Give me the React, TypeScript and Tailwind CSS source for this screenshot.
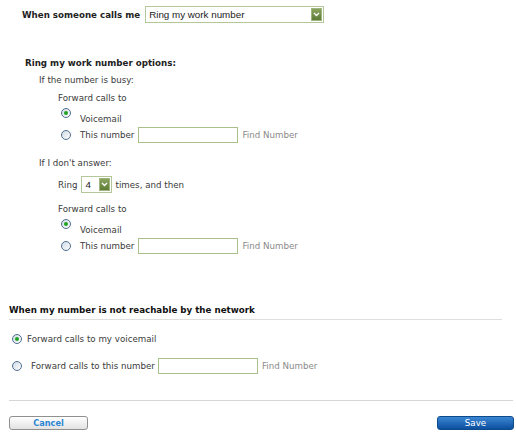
import React from 'react';

const Radio: React.FC<{ checked?: boolean }> = ({ checked }) => (
  <span className="relative inline-flex h-[10px] w-[10px] shrink-0 items-center justify-center rounded-full border border-[#4f6f8f] bg-gradient-to-br from-[#cfd9e4] to-white">
    {checked && <span className="h-[4px] w-[4px] rounded-full bg-[#21a321]" />}
  </span>
);

const Arrow: React.FC<{ className?: string }> = ({ className }) => (
  <span
    className={`flex h-[13px] w-[11px] items-center justify-center border border-[#9fb57f] bg-gradient-to-b from-[#89a35c] to-[#5f7d36] ${className ?? ''}`}
  >
    <svg width="7" height="5" viewBox="0 0 7 5">
      <path d="M1 1 L3.5 3.5 L6 1" stroke="white" strokeWidth="1.4" fill="none" />
    </svg>
  </span>
);

const NumberInput: React.FC<{ className?: string }> = ({ className }) => (
  <span className={`h-[16px] w-[100px] border border-[#a9bf8c] bg-white ${className ?? ''}`} />
);

const FindNumber: React.FC<{ className?: string }> = ({ className }) => (
  <span className={`text-[#8a8a8a] ${className ?? ''}`}>Find Number</span>
);

export default function App() {
  return (
    <div
      className="flex h-[432px] w-[516px] flex-col bg-white text-[8.7px] leading-[12px] text-[#3a3a3a]"
      style={{ fontFamily: '"DejaVu Sans", Verdana, sans-serif' }}
    >
      {/* top selector */}
      <div className="mt-[6px] flex h-[17px] items-center pl-[22px]">
        <span className="font-bold text-[#222]">When someone calls me</span>
        <div className="ml-[5px] flex h-[17px] w-[179px] items-center justify-between border border-[#b3c79a] pl-[3px] pr-[1px]">
          <span
            className="text-[9.8px] text-[#222]"
            style={{ fontFamily: '"Liberation Sans", Arial, sans-serif' }}
          >
            Ring my work number
          </span>
          <Arrow />
        </div>
      </div>

      <div className="mt-[34px] h-[12px] pl-[25px] font-bold text-[#222]">
        Ring my work number options:
      </div>
      <div className="mt-[5px] h-[12px] pl-[39px]">If the number is busy:</div>
      <div className="mt-[6px] h-[12px] pl-[58px]">Forward calls to</div>
      <div className="mt-[4px] flex h-[17px] items-start pl-[61px]">
        <Radio checked />
        <span className="ml-[9px] mt-[5px]">Voicemail</span>
      </div>
      <div className="mt-[1px] flex h-[17px] items-center pl-[61px]">
        <Radio />
        <span className="ml-[9px]">This number</span>
        <NumberInput className="ml-[4px]" />
        <FindNumber className="ml-[4px]" />
      </div>

      <div className="mt-[14px] h-[12px] pl-[39px]">If I don&apos;t answer:</div>
      <div className="mt-[7px] flex h-[17px] items-center pl-[58px]">
        <span>Ring</span>
        <div className="ml-[4px] flex h-[17px] w-[31px] items-center justify-between border border-[#b3c79a] pl-[3px] pr-[1px]">
          <span
            className="text-[9.8px] text-[#222]"
            style={{ fontFamily: '"Liberation Sans", Arial, sans-serif' }}
          >
            4
          </span>
          <Arrow />
        </div>
        <span className="ml-[3px]">times, and then</span>
      </div>
      <div className="mt-[10px] h-[12px] pl-[58px]">Forward calls to</div>
      <div className="mt-[4px] flex h-[17px] items-start pl-[61px]">
        <Radio checked />
        <span className="ml-[9px] mt-[5px]">Voicemail</span>
      </div>
      <div className="mt-[1px] flex h-[17px] items-center pl-[61px]">
        <Radio />
        <span className="ml-[9px]">This number</span>
        <NumberInput className="ml-[4px]" />
        <FindNumber className="ml-[4px]" />
      </div>

      {/* network section */}
      <div className="ml-[9px] mr-[14px] mt-[50px] border-b border-[#dedede] pb-[3px] font-bold text-[#111]">
        When my number is not reachable by the network
      </div>
      <div className="mt-[13px] flex h-[12px] items-center pl-[12px]">
        <Radio checked />
        <span className="ml-[5px]">Forward calls to my voicemail</span>
      </div>
      <div className="mt-[13px] flex h-[16px] items-center pl-[12px]">
        <Radio />
        <span className="ml-[9px]">Forward calls to this number</span>
        <NumberInput className="ml-[3px]" />
        <FindNumber className="ml-[4px]" />
      </div>

      <div className="ml-[9px] mr-[3px] mt-[26px] border-t border-[#d6d6d6]" />

      <div className="mt-[15px] flex items-center justify-between pl-[9px] pr-[2px]">
        <button className="flex h-[14px] w-[79px] items-center justify-center rounded-[3px] border border-[#909090] bg-gradient-to-b from-white to-[#e2e2e2] text-[8.2px] font-bold text-[#2c86d2]">
          Cancel
        </button>
        <button className="flex h-[14px] w-[77px] items-center justify-center rounded-[3px] border border-[#0d4a8c] bg-gradient-to-b from-[#3a87d4] to-[#0b4f9e] text-[8.7px] text-white">
          Save
        </button>
      </div>
    </div>
  );
}
